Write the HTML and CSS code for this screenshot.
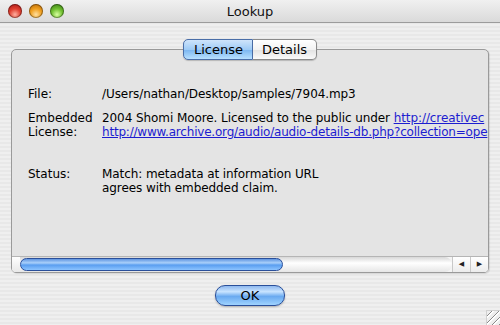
FILE: index.html
```html
<html>
    <head>
        <title>Lookup</title>
        <link rel="stylesheet" href="styles.css">
    </head>
    <body>
        <div class="window">
            <div class="titlebar">
                <div class="lights">
                    <span class="light red"></span>
                    <span class="light yellow"></span>
                    <span class="light green"></span>
                </div>
                <div class="title">Lookup</div>
            </div>
            <div class="content">
                <div class="tabs">
                    <span class="tab selected">License</span>
                    <span class="tab">Details</span>
                </div>
                <div class="panel">
                    <div class="scroller">
                        <div class="rows">
                            <div class="row">
                                <div class="label">File:</div>
                                <div class="value">/Users/nathan/Desktop/samples/7904.mp3</div>
                            </div>
                            <div class="row">
                                <div class="label">Embedded<br>License:</div>
                                <div class="value">2004 Shomi Moore. Licensed to the public under <a href="#">http://creativec</a><br><a href="#" class="long">http://www.archive.org/audio/audio-details-db.php?collection=ope</a></div>
                            </div>
                            <div class="row status">
                                <div class="label">Status:</div>
                                <div class="value">Match: metadata at information URL<br>agrees with embedded claim.</div>
                            </div>
                        </div>
                    </div>
                    <div class="hscroll">
                        <div class="cap"></div>
                        <div class="track">
                            <div class="thumb"></div>
                        </div>
                        <div class="arrow left">&#9664;</div>
                        <div class="arrow right">&#9654;</div>
                    </div>
                </div>
                <div class="buttons">
                    <button class="ok">OK</button>
                </div>
            </div>
            <div class="grip"></div>
        </div>
    </body>
</html>
```
FILE: styles.css
```css
body{
    margin: 0;
    font-family: "DejaVu Sans", sans-serif;
    font-size: 12px;
    color: #000;
}
.window{
    position: relative;
    width: 500px;
    height: 325px;
    overflow: hidden;
    background: repeating-linear-gradient(#efefef 0 2px, #e8e8e8 2px 4px);
}
.titlebar{
    height: 22px;
    border-bottom: 1px solid #9c9c9c;
    background: linear-gradient(#f0f0f0, #dadada);
    display: flex;
    align-items: center;
}
.lights{
    display: flex;
    gap: 7px;
    padding-left: 8px;
}
.light{
    width: 14px;
    height: 14px;
    border-radius: 50%;
    box-shadow: inset 0 0 0 1px rgba(0,0,0,0.35);
}
.red{
    background: radial-gradient(circle at 50% 75%, #ffb0a0 0, #e04030 45%, #a01010 100%);
}
.yellow{
    background: radial-gradient(circle at 50% 75%, #ffe0a0 0, #f0a020 45%, #b06000 100%);
}
.green{
    background: radial-gradient(circle at 50% 75%, #d8ffa0 0, #70c030 45%, #307010 100%);
}
.title{
    flex: 1;
    text-align: center;
    font-size: 13px;
    margin-right: 64px;
    color: #111;
}
.content{
    padding-top: 16px;
}
.tabs{
    display: flex;
    justify-content: center;
    margin-bottom: -11px;
    position: relative;
    z-index: 1;
}
.tab{
    height: 19px;
    line-height: 19px;
    padding: 0 11px;
    border: 1px solid #8a8a8a;
    background: linear-gradient(#ffffff, #f2f2f2 50%, #e2e2e2 51%, #fafafa);
    font-size: 13px;
    box-shadow: 0 1px 1px rgba(0,0,0,0.2);
}
.tab:first-child{
    border-radius: 5px 0 0 5px;
    padding: 0 9px 0 10px;
}
.tab:last-child{
    border-radius: 0 5px 5px 0;
    border-left: none;
    padding: 0 9px;
}
.tab.selected{
    border-color: #4a6ea8;
    background: linear-gradient(#cfe4fb, #9ecbf6 50%, #7ab5f0 51%, #b8e0ff);
}
.panel{
    margin-left: 11px;
    width: 476px;
    height: 222px;
    border: 1px solid #9a9a9a;
    border-radius: 5px;
    background: #e4e4e4;
    box-shadow: 1px 1px 1px rgba(0,0,0,0.1);
    display: flex;
    flex-direction: column;
    overflow: hidden;
}
.scroller{
    flex: 1;
    overflow: hidden;
    padding: 37px 0 0 16px;
}
.rows{
    display: flex;
    flex-direction: column;
    gap: 10px;
    line-height: 14px;
}
.row{
    display: flex;
}
.row.status{
    margin-top: 18px;
}
.label{
    width: 74px;
    flex-shrink: 0;
}
.value{
    white-space: nowrap;
    letter-spacing: -0.08px;
}
.value a{
    color: #1d1dd0;
}
.value a.long{
    letter-spacing: -0.2px;
}
.hscroll{
    height: 15px;
    display: flex;
    border-top: 1px solid #b5b5b5;
    background: #f4f4f4;
}
.cap{
    width: 8px;
    background: linear-gradient(#ffffff, #e8e8e8);
}
.track{
    flex: 1;
    background: linear-gradient(#d8d8d8, #ffffff 40%, #f2f2f2 70%, #e6e6e6);
    border-radius: 0 8px 8px 0;
}
.thumb{
    width: 263px;
    height: 13px;
    margin-top: 1px;
    border-radius: 7px;
    border: 1px solid #2a4f9a;
    box-sizing: border-box;
    background: linear-gradient(#5f94e0, #a9d0fa 35%, #5a9ef0 55%, #8cc4ff);
}
.arrow{
    width: 17px;
    font-size: 7px;
    line-height: 15px;
    text-align: center;
    color: #222;
    border-left: 1px solid #c8c8c8;
    background: linear-gradient(#ffffff, #ececec);
}
.buttons{
    display: flex;
    justify-content: center;
    padding-top: 12px;
}
.ok{
    width: 70px;
    height: 21px;
    border-radius: 10px;
    border: 1px solid #2a4f9a;
    background: linear-gradient(#8fb9ef, #c9e4ff 30%, #6aaaf0 55%, #9fd3ff);
    font-family: "DejaVu Sans", sans-serif;
    font-size: 13px;
    color: #000;
    padding: 0;
    box-shadow: 0 1px 2px rgba(0,0,0,0.25);
}
.grip{
    position: absolute;
    right: 0;
    bottom: 0;
    width: 13px;
    height: 14px;
    border-left: 1px solid #d0d0d0;
    border-top: 1px solid #d0d0d0;
    background: repeating-linear-gradient(135deg, transparent 0 3px, #8a8a8a 3px 4px, #ffffff 4px 5px) #eeeeee;
}
```
